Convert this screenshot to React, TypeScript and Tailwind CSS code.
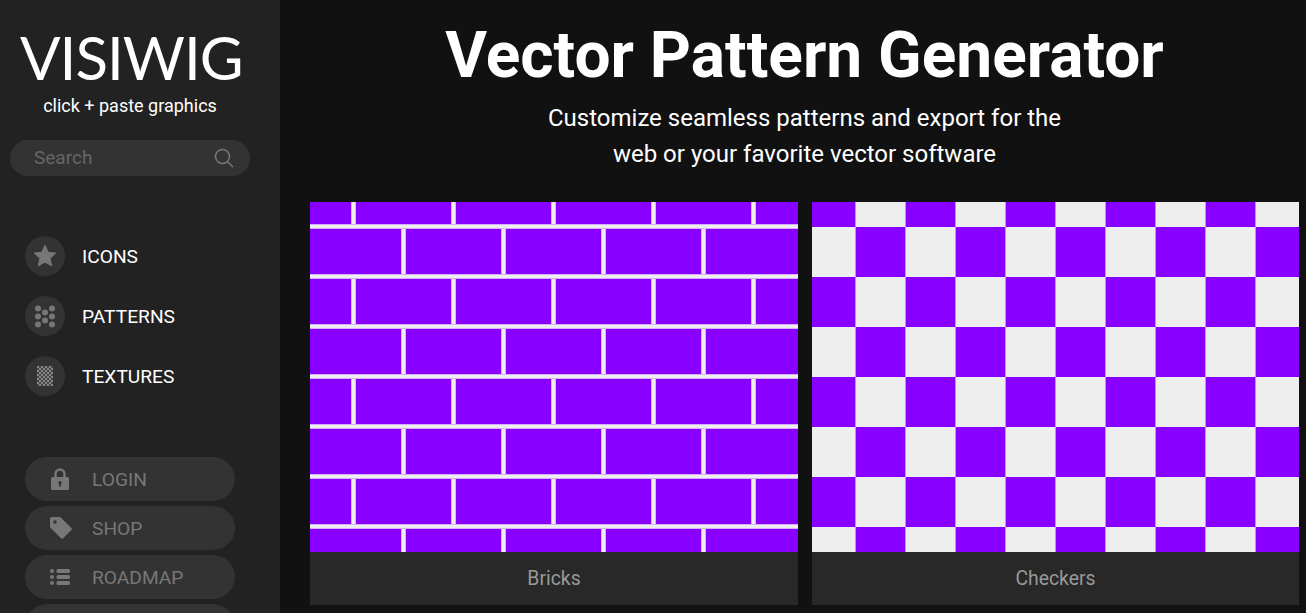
function StarIcon() {
  return (
    <svg viewBox="0 0 24 24" className="w-[24px] h-[24px]" fill="#777">
      <path d="M12 1.2l3.2 7.1 7.6.8-5.7 5.2 1.6 7.6L12 18.1l-6.7 3.8 1.6-7.6-5.7-5.2 7.600-.8z" stroke="#777" strokeWidth="1" strokeLinejoin="round" />
    </svg>
  );
}

function DotsIcon() {
  const dots = [
    [4, 3.5], [18, 3.5], [11, 7.5], [4, 11.5], [18, 11.5], [11, 15.5], [4, 19.5], [18, 19.5],
  ];
  return (
    <svg viewBox="0 0 22 23" className="w-[22px] h-[23px]" fill="#777">
      {dots.map(([cx, cy]) => (
        <circle key={`${cx}-${cy}`} cx={cx} cy={cy} r="3" />
      ))}
    </svg>
  );
}

function TextureIcon() {
  return (
    <svg viewBox="0 0 16 20" className="w-[16px] h-[20px]">
      <defs>
        <pattern id="tex" width="4" height="4" patternUnits="userSpaceOnUse">
          <rect width="4" height="4" fill="#484848" />
          <rect width="2" height="2" fill="#858585" />
          <rect x="2" y="2" width="2" height="2" fill="#858585" />
        </pattern>
      </defs>
      <rect width="16" height="20" fill="url(#tex)" />
    </svg>
  );
}

function LockIcon() {
  return (
    <svg viewBox="0 0 18 22" className="ml-[1px] w-[18px] h-[22px]" fill="#777">
      <path d="M4.500 9V6a4.500 4.500 0 0 1 9 0v3" fill="none" stroke="#777" strokeWidth="2.400" />
      <path fillRule="evenodd" d="M1.500 9h15A1.500 1.500 0 0 1 18 10.500v10a1.500 1.500 0 0 1-1.500 1.500h-15A1.500 1.500 0 0 1 0 20.500v-10A1.500 1.500 0 0 1 1.500 9zM9 13a1.700 1.700 0 0 0-1 3v2.500h2V16a1.700 1.700 0 0 0-1-3z" />
    </svg>
  );
}

function TagIcon() {
  return (
    <svg viewBox="0 0 22 22" className="w-[22px] h-[22px]" fill="#777">
      <path fillRule="evenodd" d="M1.500 0h8.200a1.500 1.500 0 0 1 1.100.4l10.600 10.600a1.500 1.500 0 0 1 0 2.100l-8.200 8.200a1.500 1.500 0 0 1-2.100 0L.4 10.700A1.500 1.500 0 0 1 0 9.600V1.500A1.500 1.500 0 0 1 1.500 0zM5 3.200a1.800 1.800 0 1 0 0 3.600 1.800 1.800 0 0 0 0-3.600z" />
    </svg>
  );
}

function ListIcon() {
  return (
    <svg viewBox="0 0 20 16" className="w-[20px] h-[16px]" fill="#777">
      <circle cx="2" cy="2" r="2" />
      <circle cx="2" cy="8" r="2" />
      <circle cx="2" cy="14" r="2" />
      <rect x="6.500" y="0" width="13.500" height="4" rx="1.500" />
      <rect x="6.500" y="6" width="13.500" height="4" rx="1.500" />
      <rect x="6.500" y="12" width="13.500" height="4" rx="1.500" />
    </svg>
  );
}

const navItems = [
  { label: "ICONS", icon: <StarIcon /> },
  { label: "PATTERNS", icon: <DotsIcon /> },
  { label: "TEXTURES", icon: <TextureIcon /> },
];

const buttons = [
  { label: "LOGIN", icon: <LockIcon /> },
  { label: "SHOP", icon: <TagIcon /> },
  { label: "ROADMAP", icon: <ListIcon /> },
  { label: "", icon: null },
];

function Sidebar() {
  return (
    <aside className="w-[280px] shrink-0 bg-[#222222] flex flex-col items-start overflow-hidden">
      <div className="shrink-0 w-full pl-[20px] pt-[33px] font-['Lato',sans-serif] font-normal tracking-[-1px] text-[60px] leading-[48px] text-white">
        VISIWIG
      </div>
      <p className="shrink-0 w-[260px] mt-[13px] text-center text-[18px] leading-[24px] text-white">click + paste graphics</p>
      <div className="shrink-0 mt-[22px] ml-[10px] w-[240px] h-[36px] rounded-full bg-[#333333] flex items-center justify-between pl-[24px] pr-[16px]">
        <span className="text-[19px] text-[#666666]">Search</span>
        <svg viewBox="0 0 20 20" className="w-[20px] h-[20px]" fill="none" stroke="#777" strokeWidth="1.5">
          <circle cx="8.500" cy="8.500" r="7" />
          <path d="M13.500 13.500l5.500 5.500" />
        </svg>
      </div>
      <nav className="shrink-0 mt-[60px] ml-[25px] flex flex-col gap-[20px]">
        {navItems.map((item) => (
          <div key={item.label} className="flex items-center gap-[17px]">
            <span className="w-[40px] h-[40px] rounded-full bg-[#333333] flex items-center justify-center">{item.icon}</span>
            <span className="pt-[2px] text-[19.2px] text-white">{item.label}</span>
          </div>
        ))}
      </nav>
      <div className="shrink-0 mt-[61px] ml-[25px] flex flex-col gap-[5px]">
        {buttons.map((item, i) => (
          <div key={i} className="w-[210px] h-[44px] shrink-0 rounded-full bg-[#333333] flex items-center">
            <span className="w-[67px] pl-[25px] flex items-center">{item.icon}</span>
            <span className="pt-[2px] text-[19.2px] text-[#777777]">{item.label}</span>
          </div>
        ))}
      </div>
    </aside>
  );
}

const MORTAR = "#eeeeee";
const MORTAR_EDGE = "#d4b0ff";

function Bricks() {
  return (
    <svg className="block w-full h-[350px]">
      <defs>
        <pattern id="bricks" width="100" height="100" patternUnits="userSpaceOnUse">
          <rect width="100" height="100" fill="#8800ff" />
          {/* verticals first, the horizontal courses sit over them */}
          <rect x="41" width="5" height="23" fill={MORTAR_EDGE} />
          <rect x="42" width="3" height="23" fill={MORTAR} />
          <rect x="41" y="77" width="5" height="23" fill={MORTAR_EDGE} />
          <rect x="42" y="77" width="3" height="23" fill={MORTAR} />
          <rect x="91" y="27" width="5" height="46" fill={MORTAR_EDGE} />
          <rect x="92" y="27" width="3" height="46" fill={MORTAR} />
          <rect y="22" width="100" height="5" fill={MORTAR_EDGE} />
          <rect y="23" width="100" height="3" fill={MORTAR} />
          <rect y="72" width="100" height="5" fill={MORTAR_EDGE} />
          <rect y="73" width="100" height="3" fill={MORTAR} />
        </pattern>
      </defs>
      <rect width="100%" height="100%" fill="url(#bricks)" />
    </svg>
  );
}

function Checkers() {
  return (
    <svg className="block w-full h-[350px]">
      <defs>
        <pattern id="checkers" x="-6" y="-25" width="100" height="100" patternUnits="userSpaceOnUse">
          <rect width="100" height="100" fill="#eeeeee" />
          <rect width="50" height="50" fill="#8800ff" />
          <rect x="50" y="50" width="50" height="50" fill="#8800ff" />
          <rect x="49" width="1" height="100" fill="#c48cff" />
          <rect x="99" width="1" height="100" fill="#c48cff" />
        </pattern>
      </defs>
      <rect width="100%" height="100%" fill="url(#checkers)" />
    </svg>
  );
}

function PatternCard({ label, children }: { label: string; children: React.ReactNode }) {
  return (
    <div>
      {children}
      <div className="h-[53px] bg-[#282828] flex items-center justify-center text-[19.4px] text-[#999999]">{label}</div>
    </div>
  );
}

export default function App() {
  return (
    <div className="h-screen overflow-hidden flex bg-[#111111] font-['Roboto',sans-serif]">
      <Sidebar />
      <main className="flex-1 min-w-0 pl-[30px] pr-[7px]">
        <h1 className="pt-[18px] text-center text-[64px] leading-[76px] font-bold text-white">Vector Pattern Generator</h1>
        <p className="mt-[6px] text-center text-[24px] leading-[36px] text-white">
          Customize seamless patterns and export for the
          <br />
          web or your favorite vector software
        </p>
        <div className="mt-[30px] grid grid-cols-[488px_487px] gap-[14px]">
          <PatternCard label="Bricks">
            <Bricks />
          </PatternCard>
          <PatternCard label="Checkers">
            <Checkers />
          </PatternCard>
        </div>
      </main>
    </div>
  );
}
